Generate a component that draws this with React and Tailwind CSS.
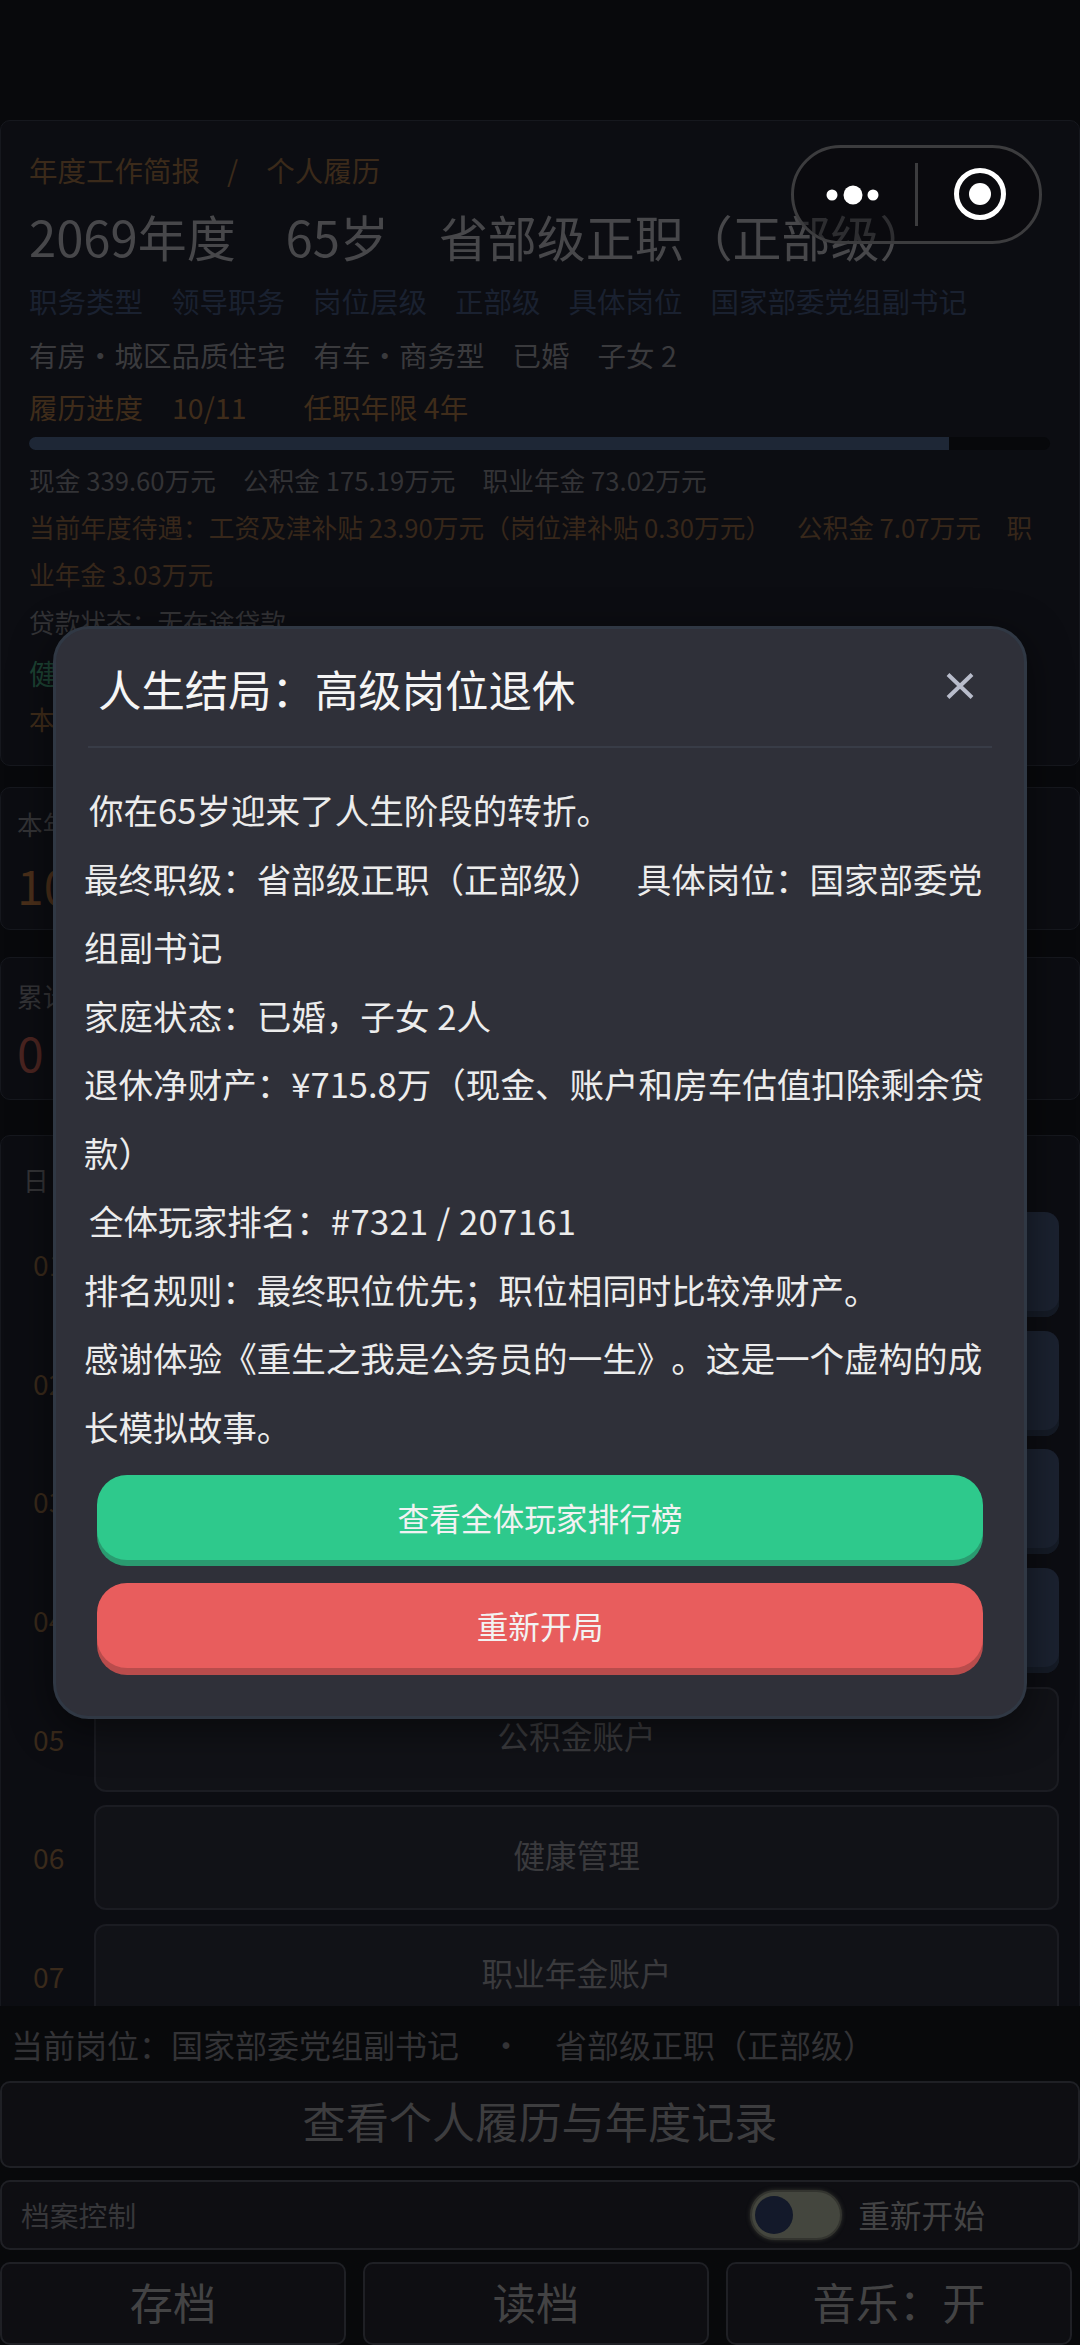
import React from "react";

const rows = [
  { no: "01", active: true },
  { no: "02", active: true },
  { no: "03", active: true },
  { no: "04", active: true },
  { no: "05", label: "公积金账户" },
  { no: "06", label: "健康管理" },
  { no: "07", label: "职业年金账户" },
];

const tags = ["职务类型", "领导职务", "岗位层级", "正部级", "具体岗位", "国家部委党组副书记"];
const assets = ["有房·城区品质住宅", "有车·商务型", "已婚", "子女 2"];

function Capsule() {
  return (
    <div className="absolute left-[791px] top-[145px] w-[251px] h-[99px] rounded-full border-[3px] border-[#3c3c3e] bg-[#08080a]/40 flex items-center">
      <svg width="251" height="99" viewBox="0 0 251 99" className="absolute left-[-3px] top-[-3px]">
        <circle cx="41" cy="50" r="5.5" fill="#fff" />
        <circle cx="62" cy="50" r="9.5" fill="#fff" />
        <circle cx="82" cy="50" r="5.5" fill="#fff" />
        <rect x="124" y="18" width="3" height="63" fill="#3c3c3e" />
        <circle cx="189" cy="49" r="23.5" fill="none" stroke="#fff" strokeWidth="5" />
        <circle cx="189" cy="49" r="11" fill="#fff" />
      </svg>
    </div>
  );
}

function ResultModal() {
  return (
    <div className="absolute left-[53px] top-[626px] w-[974px] h-[1093px] rounded-[36px] border-[3px] border-[#303844] bg-[#2f3039] shadow-[0_10px_40px_rgba(0,0,0,0.5)] flex flex-col">
      <div className="mx-[32px] h-[119px] border-b-2 border-[#383c47] flex items-center justify-between pl-[10px] pr-[18px]">
        <h2 className="text-[43.4px] leading-[60px] text-[#f5f5f5] font-normal">人生结局：高级岗位退休</h2>
        <svg width="28" height="26" viewBox="0 0 28 26" className="mt-[-3px]">
          <path d="M2 1.5L26 24.5M26 1.5L2 24.5" stroke="#b8bccb" strokeWidth="4" fill="none" />
        </svg>
      </div>
      <div className="mt-[27px] px-[28px] text-[34.56px] leading-[68.5px] text-[#ececec]">
        <p className="pl-[5px]">你在65岁迎来了人生阶段的转折。</p>
        <p>最终职级：省部级正职（正部级）　具体岗位：国家部委党组副书记</p>
        <p>家庭状态：已婚，子女 2人</p>
        <p>退休净财产：¥715.8万（现金、账户和房车估值扣除剩余贷款）</p>
        <p className="pl-[5px]">
          全体玩家排名：<span className="tracking-[0.4px]">#7321 / 207161</span>
        </p>
        <p>排名规则：最终职位优先；职位相同时比较净财产。</p>
        <p>感谢体验《重生之我是公务员的一生》。这是一个虚构的成长模拟故事。</p>
      </div>
      <div className="mt-[15px] px-[41px] flex flex-col gap-[23px]">
        <button className="h-[85px] rounded-[30px] bg-[#2ec98c] shadow-[0_6px_0_#2a9b70] text-[31.68px] text-[#f2f2f2]">
          查看全体玩家排行榜
        </button>
        <button className="h-[85px] rounded-[30px] bg-[#e85d5d] shadow-[0_7px_0_#b94c4c] text-[31.68px] text-[#f2f2f2]">
          重新开局
        </button>
      </div>
    </div>
  );
}

export default function App() {
  return (
    <div className="relative w-[1080px] h-[2345px] overflow-hidden bg-[#08090c] font-['Noto_Sans_CJK_SC',sans-serif] [text-spacing-trim:space-all] flex flex-col">
      <div className="flex-1 min-h-0 overflow-hidden pt-[120px]">
        <section className="h-[646px] rounded-[10px] border border-[#16181e] bg-[#0c0d12] pl-[28px] pr-[28px] pt-[27px]">
          <div className="h-[44px] leading-[44px] flex text-[28.5px] text-[#3b2a1a]">
            <span>年度工作简报</span>
            <span className="ml-[27px]">/</span>
            <span className="ml-[28px]">个人履历</span>
          </div>
          <div className="mt-[10px] h-[68px] leading-[68px] flex gap-[50px] text-[48.96px] text-[#47474a]">
            <span>2069年度</span>
            <span>65岁</span>
            <span>省部级正职（正部级）</span>
          </div>
          <div className="mt-[9px] h-[44px] leading-[44px] flex gap-[28px] text-[28.5px] text-[#1a2130]">
            {tags.map((tag) => (
              <span key={tag}>{tag}</span>
            ))}
          </div>
          <div className="mt-[10px] h-[44px] leading-[44px] flex gap-[28px] text-[28.5px] text-[#3a3a3d]">
            {assets.map((item) => (
              <span key={item}>{item}</span>
            ))}
          </div>
          <div className="mt-[8px] h-[44px] leading-[44px] flex text-[28.5px] text-[#3f2c1a]">
            <span>履历进度</span>
            <span className="ml-[29px]">10/11</span>
            <span className="ml-[57px]">任职年限 4年</span>
          </div>
          <div className="mt-[8px] h-[13px] rounded-full bg-[#07080b] overflow-hidden w-[1021px]">
            <div className="h-full w-[920px] bg-[#1e2736]" />
          </div>
          <div className="mt-[10px] h-[40px] leading-[40px] flex gap-[27px] text-[25.7px] text-[#333336]">
            <span>现金 339.60万元</span>
            <span>公积金 175.19万元</span>
            <span>职业年金 73.02万元</span>
          </div>
          <p className="mt-[3px] leading-[47px] text-[25.7px] text-[#37271a]">
            当前年度待遇：工资及津补贴 23.90万元（岗位津补贴 0.30万元）　公积金 7.07万元　职业年金 3.03万元
          </p>
          <p className="mt-[5px] h-[40px] leading-[40px] text-[25.7px] text-[#333336]">贷款状态：无在途贷款</p>
          <p className="mt-[11px] h-[40px] leading-[40px] text-[28.5px] text-[#1c4233]">健</p>
          <p className="mt-[6px] h-[40px] leading-[40px] text-[25.7px] text-[#3f2c1a]">本</p>
        </section>

        <section className="mt-[21px] h-[143px] rounded-[10px] border border-[#16181e] bg-[#0c0d12] pl-[16px] pt-[16px]">
          <div className="h-[40px] leading-[40px] text-[25.7px] text-[#333336]">本年</div>
          <div className="mt-[10px] leading-[60px] text-[48px] text-[#4a2f1a]">10</div>
        </section>

        <section className="mt-[27px] h-[143px] rounded-[10px] border border-[#16181e] bg-[#0c0d12] pl-[16px] pt-[18px]">
          <div className="h-[40px] leading-[40px] text-[25.7px] text-[#333336]">累计</div>
          <div className="mt-[5px] leading-[60px] text-[48px] text-[#4a2420]">0</div>
        </section>

        <section className="mt-[35px] rounded-[10px] border border-[#16181e] bg-[#0c0d12] pt-[24px] pl-[22px] pr-[20px] pb-[40px]">
          <div className="h-[40px] leading-[40px] text-[25.7px] text-[#333336]">日</div>
          <div className="mt-[12px] flex flex-col gap-[13.7px]">
            {rows.map((row) => (
              <div key={row.no} className="flex items-center">
                <span className="w-[71px] pl-[10px] pb-[1px] text-[28.2px] text-[#3a2a1b]">{row.no}</span>
                <div
                  className={
                    row.active
                      ? "flex-1 h-[105px] rounded-[14px] bg-[#1b2230] shadow-[inset_0_-6px_0_#151b26]"
                      : "flex-1 h-[105px] rounded-[12px] border-2 border-[#1b1c22] bg-[#111217] flex items-center justify-center pb-[7px] text-[31.68px] text-[#3a3a3d]"
                  }
                >
                  {row.label}
                </div>
              </div>
            ))}
          </div>
        </section>
      </div>

      <footer className="h-[339px] shrink-0 bg-[#08090b]">
        <div className="h-[75px] pl-[11px] pt-[14px] leading-[48px] flex text-[32px] text-[#333336]">
          <span>当前岗位：国家部委党组副书记</span>
          <span className="ml-[31px]">·</span>
          <span className="ml-[33px]">省部级正职（正部级）</span>
        </div>
        <button className="w-full h-[87px] rounded-[10px] border-2 border-[#1f2025] bg-[#0e0e12] pb-[8px] text-[43.2px] text-[#3d3d3f]">
          查看个人履历与年度记录
        </button>
        <div className="mt-[12px] h-[70px] rounded-[10px] border-2 border-[#1f2025] bg-[#0e0e12] flex items-center pl-[19px]">
          <span className="text-[28.8px] text-[#37373a]">档案控制</span>
          <div className="ml-[614px] w-[92px] h-[50px] rounded-full bg-[#44463e] border-[2px] border-[#33342f] shadow-[0_0_4px_#33342f] flex items-center pl-[3px]">
            <div className="w-[38px] h-[38px] rounded-full bg-[#13192a]" />
          </div>
          <span className="ml-[16px] text-[31.68px] text-[#434344]">重新开始</span>
        </div>
        <div className="mt-[12px] pr-[8px] grid grid-cols-3 gap-[17px]">
          {["存档", "读档", "音乐：开"].map((label) => (
            <button
              key={label}
              className="h-[83px] rounded-[10px] border-2 border-[#1f2025] bg-[#0e0e12] pb-[4px] text-[43.2px] text-[#434344]"
            >
              {label}
            </button>
          ))}
        </div>
      </footer>

      <Capsule />
      <ResultModal />
    </div>
  );
}
